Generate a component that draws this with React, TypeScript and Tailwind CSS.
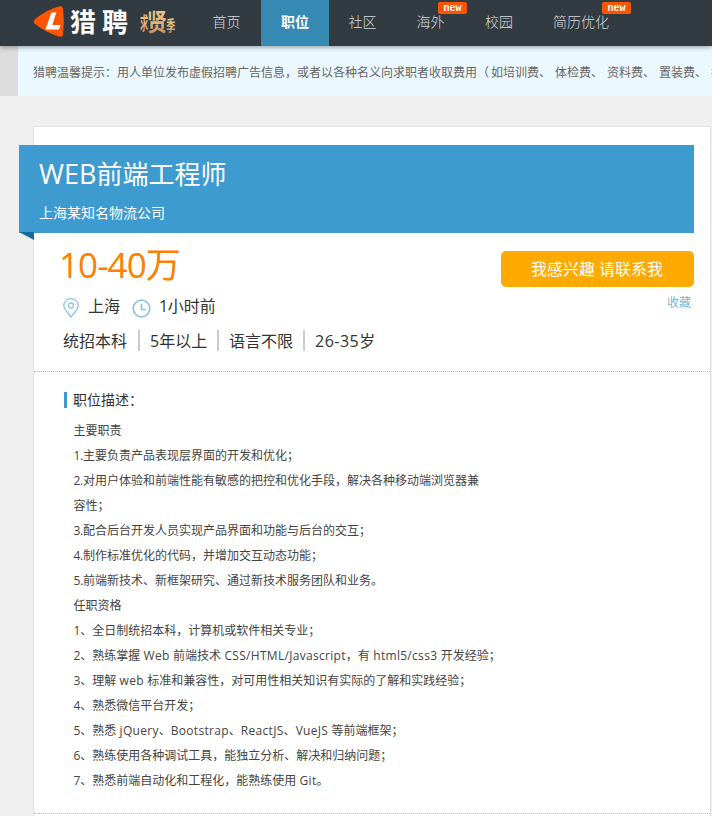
import React from "react";

const YAHEI = "font-['Open_Sans','Noto_Sans_CJK_SC',sans-serif]";
const SONG = "font-['Noto_Sans_CJK_SC',sans-serif]";

function NewTag() {
  return (
    <span className="flex h-[12px] w-[29px] items-center justify-center rounded-[2px] bg-[#ff5500] pt-px font-['Liberation_Mono',monospace] text-[10px] font-bold leading-none text-white">
      new
    </span>
  );
}

function NavItem({ label, active, width }: { label: string; active?: boolean; width: string }) {
  return (
    <a
      className={`flex h-[46px] items-center justify-center pb-[4px] text-[14px] ${width} ${
        active ? "bg-[#3689b3] font-bold text-white" : "font-light text-[#d8dadc]"
      }`}
    >
      {label}
    </a>
  );
}

function Header() {
  return (
    <header className={`relative z-10 flex h-[46px] bg-[#323a42] shadow-[0_1px_5px_rgba(0,0,0,0.4)] ${SONG}`}>
      <div className="flex w-[192px] shrink-0 items-start pl-[33px]">
        <svg className="mt-[5px] h-[33px] w-[32px] shrink-0" viewBox="0 0 32 33">
          <path d="M1.5 14.5 Q0 16.5 1.5 18.5 C9 24.5 17 29 26.5 31.7 Q29.3 32.3 30 29.5 Q31.6 16.5 30 3.5 Q29.3 .5 26.5 1.3 C17 4 9 8.500 1.500 14.500Z" fill="#ff5500" />
          <path d="M18.300 7.500 L23.300 7.500 L19.300 20 L27.500 20 L26 24.500 L12.500 24.500Z" fill="#fff" />
        </svg>
        <div className="ml-[5px] mt-[3px] flex w-[62px] shrink-0 gap-[6px] text-[26px] font-bold leading-[35px] text-white">
          <span>猎</span>
          <span>聘</span>
        </div>
        <svg className="ml-[8px] mt-[6px] h-[32px] w-[36px] shrink-0 overflow-visible font-bold" viewBox="0 0 36 32">
          <defs>
            <linearGradient id="gold" x1="0" y1="0" x2="0" y2="1">
              <stop offset="0" stopColor="#f5d28a" />
              <stop offset="0.7" stopColor="#dcae74" />
              <stop offset="1" stopColor="#b87763" />
            </linearGradient>
          </defs>
          <text x="0" y="16" fontSize="12" fill="url(#gold)" transform="scale(.68 1.500)">求</text>
          <text x="7" y="20.500" fontSize="20" fontWeight="700" fill="url(#gold)" transform="scale(1 1.200)">贤</text>
          <text x="35" y="21" fontSize="12" fill="url(#gold)" transform="scale(.75 1.200)">季</text>
        </svg>
      </div>
      <nav className="flex">
        <NavItem label="首页" width="w-[69px]" />
        <NavItem label="职位" width="w-[68px]" active />
        <NavItem label="社区" width="w-[67px]" />
        <NavItem label="海外" width="w-[69px]" />
        <NavItem label="校园" width="w-[68px]" />
        <NavItem label="简历优化" width="w-[96px]" />
      </nav>
      <div className="absolute left-[438px] top-[2px]"><NewTag /></div>
      <div className="absolute left-[602px] top-[2px]"><NewTag /></div>
    </header>
  );
}

function Notice() {
  return (
    <div className="flex h-[50px] bg-[#dcdcdc] pl-[18px]">
      <div className={`flex flex-1 items-center overflow-hidden whitespace-nowrap bg-[#ecf8ff] pl-[15px] pt-px text-[12px] text-[#666] ${SONG}`}>
        <span>猎聘温馨提示：用人单位发布虚假招聘广告信息，或者以各种名义向求职者收取费用</span>
        <span className="mr-[2px]">（</span>
        <span className="mr-[4px]">如培训费、</span>
        <span className="mr-[4px]">体检费、</span>
        <span className="mr-[4px]">资料费、</span>
        <span className="mr-[4px]">置装费、</span>
        <span>押金</span>
      </div>
    </div>
  );
}

// Latin runs carry their own tracking; longer runs with words are set looser than bare numerals.
function Mixed({ text, latin }: { text: string; latin?: string }) {
  return (
    <>
      {text.split(/([\x20-\x7e]+)/).map((part, i) => {
        const own = latin ?? (/[A-Za-z]/.test(part) ? "tracking-[0.3px]" : "tracking-[-0.25px]");
        return <span key={i} className={i % 2 ? own : ""}>{part}</span>;
      })}
    </>
  );
}

const lines = [
  "主要职责",
  "1.主要负责产品表现层界面的开发和优化；",
  "2.对用户体验和前端性能有敏感的把控和优化手段，解决各种移动端浏览器兼",
  "容性；",
  "3.配合后台开发人员实现产品界面和功能与后台的交互；",
  "4.制作标准优化的代码，并增加交互动态功能；",
  "5.前端新技术、新框架研究、通过新技术服务团队和业务。",
  "任职资格",
  "1、全日制统招本科，计算机或软件相关专业；",
  "2、熟练掌握 Web 前端技术 CSS/HTML/Javascript，有 html5/css3 开发经验；",
  "3、理解 web 标准和兼容性，对可用性相关知识有实际的了解和实践经验；",
  "4、熟悉微信平台开发；",
  "5、熟悉 jQuery、Bootstrap、ReactJS、VueJS 等前端框架；",
  "6、熟练使用各种调试工具，能独立分析、解决和归纳问题；",
  "7、熟悉前端自动化和工程化，能熟练使用 Git。",
];

function Summary() {
  return (
    <section className="flex h-[139px] justify-between border-b border-dotted border-[#bbb] pl-[25px] pr-[16px] text-[#333]">
      <div className="whitespace-nowrap">
        <div className="mt-[8px] h-[48px] text-[35px] leading-[47px] text-[#ff8000]">
          <Mixed text="10-40万" latin="tracking-[-0.9px]" />
        </div>
        <div className="flex h-[34px] items-center pl-[4px] text-[16px]">
          <svg className="mt-[3px] h-[20px] w-[16px]" viewBox="0 0 16 20" fill="none" stroke="#8fc5e0" strokeWidth="1.3">
            <path d="M8 19 C5.500 15.500 .8 11.500 .8 7.500 A7.200 6.900 0 0 1 15.200 7.500 C15.200 11.500 10.500 15.500 8 19Z" />
            <circle cx="8" cy="7.500" r="2.500" />
          </svg>
          <span className="ml-[9px]">上海</span>
          <svg className="ml-[12px] mt-[4px] h-[19px] w-[19px]" viewBox="0 0 19 19" fill="none" stroke="#8fc5e0" strokeWidth="1.700">
            <circle cx="9.500" cy="9.500" r="8.300" />
            <path d="M9.500 5V10.500H14" />
          </svg>
          <span className="ml-[8px]"><Mixed text="1小时前" latin="tracking-[-0.5px]" /></span>
        </div>
        <div className="mt-[7px] flex h-[21px] items-center pl-[4px] text-[16px]">
          <span className="w-[75px]">统招本科</span>
          <span className="flex h-[21px] w-[79px] items-center border-l-2 border-[#ccc] pl-[10px]"><Mixed text="5年以上" latin="tracking-[0px]" /></span>
          <span className="flex h-[21px] w-[86px] items-center border-l-2 border-[#ccc] pl-[10px]">语言不限</span>
          <span className="flex h-[21px] items-center border-l-2 border-[#ccc] pl-[10px]"><Mixed text="26-35岁" latin="tracking-[0.5px]" /></span>
        </div>
      </div>
      <div className="flex flex-col items-end pt-[18px]">
        <button className="h-[36px] w-[193px] rounded-[5px] bg-[#ffaa00] pr-px text-[16px] text-white">我感兴趣 请联系我</button>
        <a className="mr-[3px] mt-[7px] text-[12px] leading-[18px] text-[#7eb4d2]">收藏</a>
      </div>
    </section>
  );
}

export default function App() {
  return (
    <div className="h-[816px] w-[712px] overflow-hidden bg-[#efefef]">
      <Header />
      <Notice />
      <main className={`ml-[33px] mt-[30px] h-[700px] w-[678px] border border-[#e2e2e2] bg-white pt-[18px] ${YAHEI}`}>
        <div className="relative -ml-[15px] h-[88px] w-[675px] bg-[#3d9bcf] pl-[20px] text-white">
          <h1 className="h-[58px] text-[26px] leading-[58px]"><Mixed text="WEB前端工程师" latin="text-[27px]" /></h1>
          <p className="text-[14px] leading-[20px]">上海某知名物流公司</p>
          <svg className="absolute left-0 top-[87px] h-[8px] w-[15px]" viewBox="0 0 15 8">
            <path d="M0 0H15V8Z" fill="#146c9c" />
          </svg>
        </div>
        <Summary />
        <section className="h-[442px] border-b border-dotted border-[#bbb] pl-[30px] pt-[20px]">
          <h2 className="flex h-[16px] items-center border-l-[3px] border-[#3d9bcf] pb-[2px] pl-[6px] text-[14px] text-[#333]">职位描述：</h2>
          <div className="mt-[10px] whitespace-nowrap pl-[9.5px] text-[12px] leading-[25px] text-[#444]">
            {lines.map((line) => (
              <p key={line} className="h-[25px]"><Mixed text={line} /></p>
            ))}
          </div>
        </section>
      </main>
    </div>
  );
}
